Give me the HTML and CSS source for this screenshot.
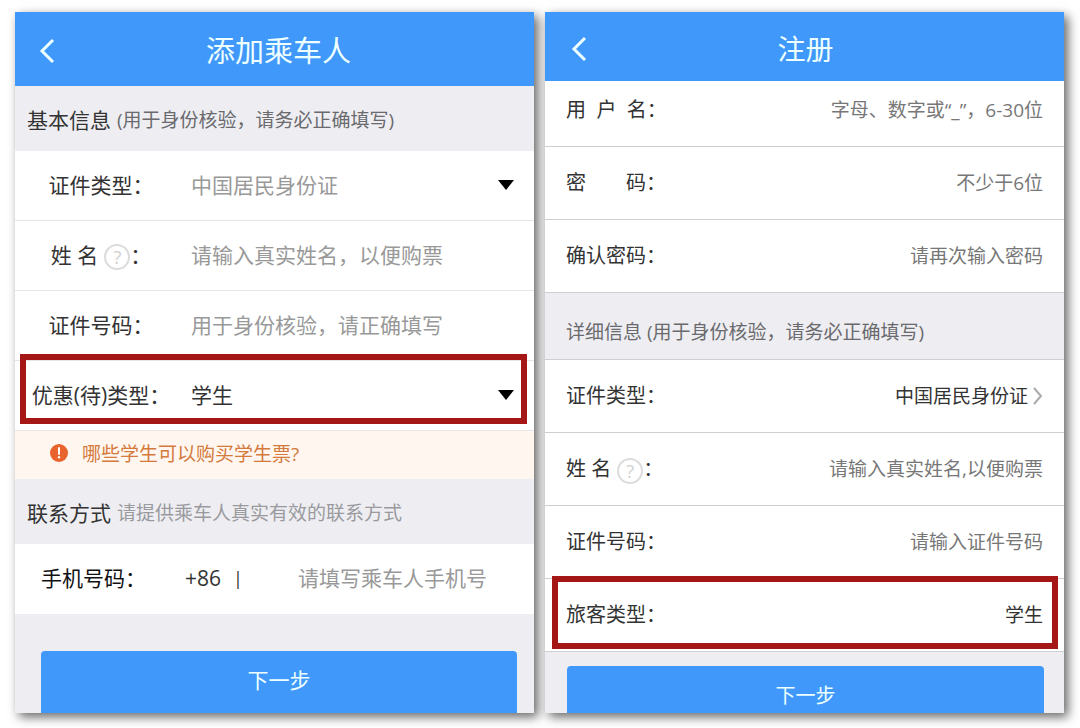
FILE: index.html
```html
<!DOCTYPE html>
<html lang="zh-CN">
<head>
    <meta charset="UTF-8">
    <meta name="viewport" content="width=device-width, initial-scale=1.0">
    <title>添加乘车人 / 注册</title>
    <link rel="stylesheet" href="styles.css">
</head>
<body>
    <form class="screen passenger">
        <header class="topbar">
            <button type="button" class="back" aria-label="返回">
                <svg width="16" height="26" viewBox="0 0 16 26"><path d="M14 2 L3 13 L14 24"/></svg>
            </button>
            <h1>添加乘车人</h1>
        </header>

        <div class="section">
            <h2>基本信息</h2>
            <p>(用于身份核验，请务必正确填写)</p>
        </div>
        <div class="row">
            <label for="p-idtype">证件类型：</label>
            <select id="p-idtype" class="muted">
                <option>中国居民身份证</option>
            </select>
            <svg class="arrow" width="16" height="10" viewBox="0 0 16 10"><path d="M0 0 H16 L8 10 Z"/></svg>
        </div>
        <div class="row">
            <label for="p-name">姓&nbsp;名<span class="help">?</span>：</label>
            <input type="text" id="p-name" placeholder="请输入真实姓名，以便购票">
        </div>
        <div class="row">
            <label for="p-idno">证件号码：</label>
            <input type="text" id="p-idno" placeholder="用于身份核验，请正确填写">
        </div>
        <div class="row highlight">
            <label for="p-discount">优惠(待)类型：</label>
            <select id="p-discount">
                <option>学生</option>
            </select>
            <svg class="arrow" width="16" height="10" viewBox="0 0 16 10"><path d="M0 0 H16 L8 10 Z"/></svg>
        </div>
        <a href="#" class="tip">
            <svg width="18" height="18" viewBox="0 0 18 18">
                <circle cx="9" cy="9" r="9" fill="#e8642c"/>
                <path d="M9 4 V10" stroke="#fff" stroke-width="2" stroke-linecap="round"/>
                <circle cx="9" cy="13.2" r="1.2" fill="#fff"/>
            </svg>
            哪些学生可以购买学生票?
        </a>

        <div class="section contact">
            <h2>联系方式</h2>
            <p>请提供乘车人真实有效的联系方式</p>
        </div>
        <div class="row phone">
            <label for="p-phone">手机号码：</label>
            <span class="code">+86</span>
            <span class="divider">|</span>
            <input type="tel" id="p-phone" placeholder="请填写乘车人手机号">
        </div>
        <div class="actions">
            <button type="submit">下一步</button>
        </div>
    </form>

    <form class="screen register">
        <header class="topbar">
            <button type="button" class="back" aria-label="返回">
                <svg width="16" height="26" viewBox="0 0 16 26"><path d="M14 2 L3 13 L14 24"/></svg>
            </button>
            <h1>注册</h1>
        </header>

        <div class="row first">
            <label for="r-user">用&nbsp;&nbsp;户&nbsp;&nbsp;名：</label>
            <input type="text" id="r-user" placeholder="字母、数字或“_”，6-30位">
        </div>
        <div class="row">
            <label for="r-pass">密&emsp;&emsp;码：</label>
            <input type="password" id="r-pass" placeholder="不少于6位">
        </div>
        <div class="row">
            <label for="r-pass2">确认密码：</label>
            <input type="password" id="r-pass2" placeholder="请再次输入密码">
        </div>
        <div class="section">
            <p>详细信息 (用于身份核验，请务必正确填写)</p>
        </div>
        <div class="row">
            <label for="r-idtype">证件类型：</label>
            <select id="r-idtype">
                <option>中国居民身份证</option>
            </select>
            <svg class="chevron" width="10" height="18" viewBox="0 0 10 18"><path d="M1 1 L8 9 L1 17"/></svg>
        </div>
        <div class="row">
            <label for="r-name">姓&nbsp;名<span class="help">?</span>：</label>
            <input type="text" id="r-name" placeholder="请输入真实姓名,以便购票">
        </div>
        <div class="row">
            <label for="r-idno">证件号码：</label>
            <input type="text" id="r-idno" placeholder="请输入证件号码">
        </div>
        <div class="row highlight">
            <label for="r-type">旅客类型：</label>
            <select id="r-type">
                <option>学生</option>
            </select>
        </div>
        <div class="actions">
            <button type="submit">下一步</button>
        </div>
    </form>
</body>
</html>
```
FILE: styles.css
```css
* {
    box-sizing: border-box;
}

body {
    display: flex;
    gap: 11px;
    height: 100vh;
    margin: 0;
    padding: 12px 16px 15px 15px;
    background: #fff;
    font-family: "Open Sans", "Noto Sans CJK SC", sans-serif;
    color: #333;
}

h1, h2, p {
    margin: 0;
    font-weight: 400;
}

input, select, button {
    font: inherit;
    color: inherit;
    border: none;
    outline: none;
    padding: 0;
    background: transparent;
}

input, select {
    flex: 1;
    min-width: 0;
    height: 40px;
}

select {
    appearance: none;
}

.screen {
    flex: 1;
    min-width: 0;
    overflow: hidden;
    background: #eeeef2;
    box-shadow: 4px 4px 10px rgba(0, 0, 0, 0.6);
}

/* top bar */
.topbar {
    display: flex;
    align-items: center;
    height: 74px;
    padding: 4px 47px 0 17px;
    background: #4098fa;
    color: #edffff;
}

.topbar h1 {
    flex: 1;
    font-size: 29px;
    line-height: 40px;
    text-align: center;
}

.back {
    display: flex;
    width: 38px;
    padding: 8px 7px;
    cursor: pointer;
}

.back path {
    fill: none;
    stroke: #edffff;
    stroke-width: 3;
}

/* form rows */
.row {
    position: relative;
    display: flex;
    align-items: center;
    height: 70px;
    padding-bottom: 2px;
    background: #fff;
    border-bottom: 1px solid #e6e6e8;
    font-size: 21px;
    line-height: 30px;
}

.row label {
    display: flex;
    align-items: center;
    white-space: nowrap;
}

.section {
    display: flex;
    align-items: center;
    height: 65px;
    padding: 2px 12px 0;
    line-height: 30px;
}

.section h2 {
    margin-right: 6px;
    font-size: 21px;
}

.section p {
    font-size: 19px;
    color: #6a6a6e;
}

.help {
    width: 26px;
    height: 26px;
    margin: 4px 0 0 6px;
    border: 2px solid #dcdcdc;
    border-radius: 50%;
    font-size: 19px;
    line-height: 22px;
    text-align: center;
    color: #d2d2d2;
}

.highlight::after {
    content: "";
    position: absolute;
    inset: -7px 7px 6px 5px;
    border: 6px solid #a51616;
    pointer-events: none;
}

.actions button {
    display: block;
    width: 100%;
    height: 62px;
    padding-bottom: 6px;
    border-radius: 4px 4px 0 0;
    background: #4098fa;
    color: #edffff;
    font-size: 21px;
    cursor: pointer;
}

/* add passenger */
.passenger .row label {
    justify-content: center;
    width: 172px;
    margin-right: 4px;
}

.passenger ::placeholder,
.passenger .muted {
    color: #999;
    opacity: 1;
}

.arrow {
    margin-right: 20px;
    fill: #000;
}

.tip {
    display: flex;
    align-items: center;
    gap: 14px;
    height: 48px;
    padding: 0 35px 4px;
    background: #fff6ef;
    color: #d47a3c;
    font-size: 19px;
    text-decoration: none;
}

.section.contact p {
    color: #9a9a9e;
}

.row.phone {
    border-bottom: none;
}

.row.phone label {
    justify-content: flex-start;
    width: 145px;
    margin-right: 0;
    padding-left: 26px;
    color: #111;
}

.code {
    width: 48px;
    padding-left: 25px;
    box-sizing: content-box;
}

.divider {
    width: 65px;
    font-size: 18px;
}

.passenger .actions {
    padding: 37px 17px 0 26px;
}

/* register */
.register .topbar {
    height: 69px;
    padding: 4px 55px 0 19px;
}

.register .topbar h1 {
    font-size: 28px;
}

.register .row {
    height: 73px;
    padding: 0 21px;
    border-color: #cfcfd1;
    font-size: 20px;
}

.register .row.first {
    height: 66px;
    padding-bottom: 8px;
}

.register input,
.register select {
    font-size: 19px;
    text-align: right;
    text-align-last: right;
}

.register ::placeholder {
    color: #777;
    opacity: 1;
}

.register .section {
    height: 67px;
    padding: 12px 21px 0;
    border-bottom: 1px solid #cfcfd1;
}

.register .section p {
    font-size: 19px;
}

.chevron {
    margin-left: 5px;
    fill: none;
    stroke: #aaa;
    stroke-width: 2;
}

.register .highlight::after {
    inset: -3px 6px 2px 7px;
}

.register .actions {
    padding: 14px 20px 0 22px;
}

.register .actions button {
    font-size: 20px;
}
```
